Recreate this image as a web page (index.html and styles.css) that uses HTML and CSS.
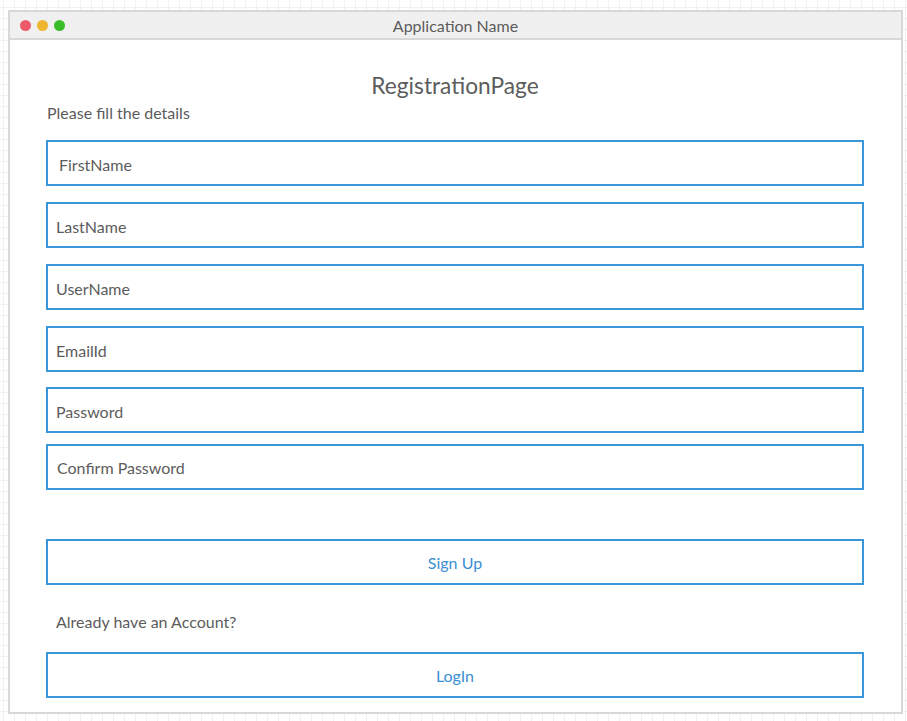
FILE: index.html
```html
<!DOCTYPE html>
<html>
<head>
<meta charset="utf-8">
<title>Registration</title>
<link rel="stylesheet" href="styles.css">
</head>
<body>
<div class="window">
  <div class="titlebar">
    <div class="dots">
      <span class="dot dot-red"></span>
      <span class="dot dot-yellow"></span>
      <span class="dot dot-green"></span>
    </div>
    <div class="app-name">Application Name</div>
  </div>
  <div class="content">
    <div class="heading">RegistrationPage</div>
    <div class="subtitle">Please fill the details</div>
    <div class="field field-first"><span class="placeholder placeholder-wide">FirstName</span></div>
    <div class="field"><span class="placeholder">LastName</span></div>
    <div class="field"><span class="placeholder">UserName</span></div>
    <div class="field"><span class="placeholder">EmailId</span></div>
    <div class="field field-g15"><span class="placeholder">Password</span></div>
    <div class="field field-g11"><span class="placeholder placeholder-confirm">Confirm Password</span></div>
    <div class="button button-signup">Sign Up</div>
    <div class="account-text">Already have an Account?</div>
    <div class="button button-login">LogIn</div>
  </div>
</div>
</body>
</html>
```
FILE: styles.css
```css
html, body {
  margin: 0;
  padding: 0;
}
body {
  width: 907px;
  height: 721px;
  overflow: hidden;
  background-color: #ffffff;
  background-image:
    linear-gradient(to right, #f1f1f1 1px, transparent 1px),
    linear-gradient(to bottom, #f1f1f1 1px, transparent 1px);
  background-size: 11px 11px;
  background-position: 3px 7px;
  font-family: Lato, "Open Sans", sans-serif;
  color: #5c5c5c;
}
.window {
  margin: 10px 0 0 8px;
  width: 895px;
  height: 704px;
  box-sizing: border-box;
  border: 2px solid #d8d8d8;
  background: #ffffff;
  display: flex;
  flex-direction: column;
}
.titlebar {
  position: relative;
  height: 28px;
  box-sizing: border-box;
  background: #f0f0f0;
  border-bottom: 2px solid #d8d8d8;
  display: flex;
  align-items: center;
  justify-content: center;
}
.dots {
  position: absolute;
  left: 10px;
  top: 8px;
  display: flex;
  gap: 6px;
}
.dot {
  width: 11px;
  height: 11px;
  border-radius: 50%;
  display: block;
}
.dot-red { background: #ec5a6c; }
.dot-yellow { background: #eeb530; }
.dot-green { background: #3bbd2a; }
.app-name {
  font-size: 16px;
  color: #5c5c5c;
  line-height: 19px;
}
.content {
  padding: 0 37px 0 36px;
  display: flex;
  flex-direction: column;
}
.heading {
  margin-top: 33px;
  height: 26px;
  line-height: 26px;
  font-size: 22.7px;
  text-align: center;
  color: #5c5c5c;
}
.subtitle {
  margin-top: 5px;
  line-height: 18px;
  font-size: 16px;
  padding-left: 1px;
}
.field {
  margin-top: 16px;
  height: 46px;
  box-sizing: border-box;
  border: 2px solid #3a96da;
  display: flex;
  align-items: center;
  padding-left: 8px;
  padding-top: 3px;
}
.field-first { margin-top: 18px; }
.field-g15 { margin-top: 15px; }
.field-g11 { margin-top: 11px; padding-top: 1px; }
.placeholder {
  font-size: 16px;
  color: #5c5c5c;
  line-height: 18px;
}
.placeholder-wide { padding-left: 3px; }
.placeholder-confirm { padding-left: 1px; }
.button {
  height: 46px;
  box-sizing: border-box;
  border: 2px solid #3a96da;
  display: flex;
  align-items: center;
  justify-content: center;
  font-size: 16px;
  color: #3a8fd2;
}
.button-signup { margin-top: 49px; }
.account-text {
  margin-top: 28px;
  line-height: 18px;
  font-size: 16px;
  padding-left: 10px;
}
.button-login { margin-top: 21px; }
```
